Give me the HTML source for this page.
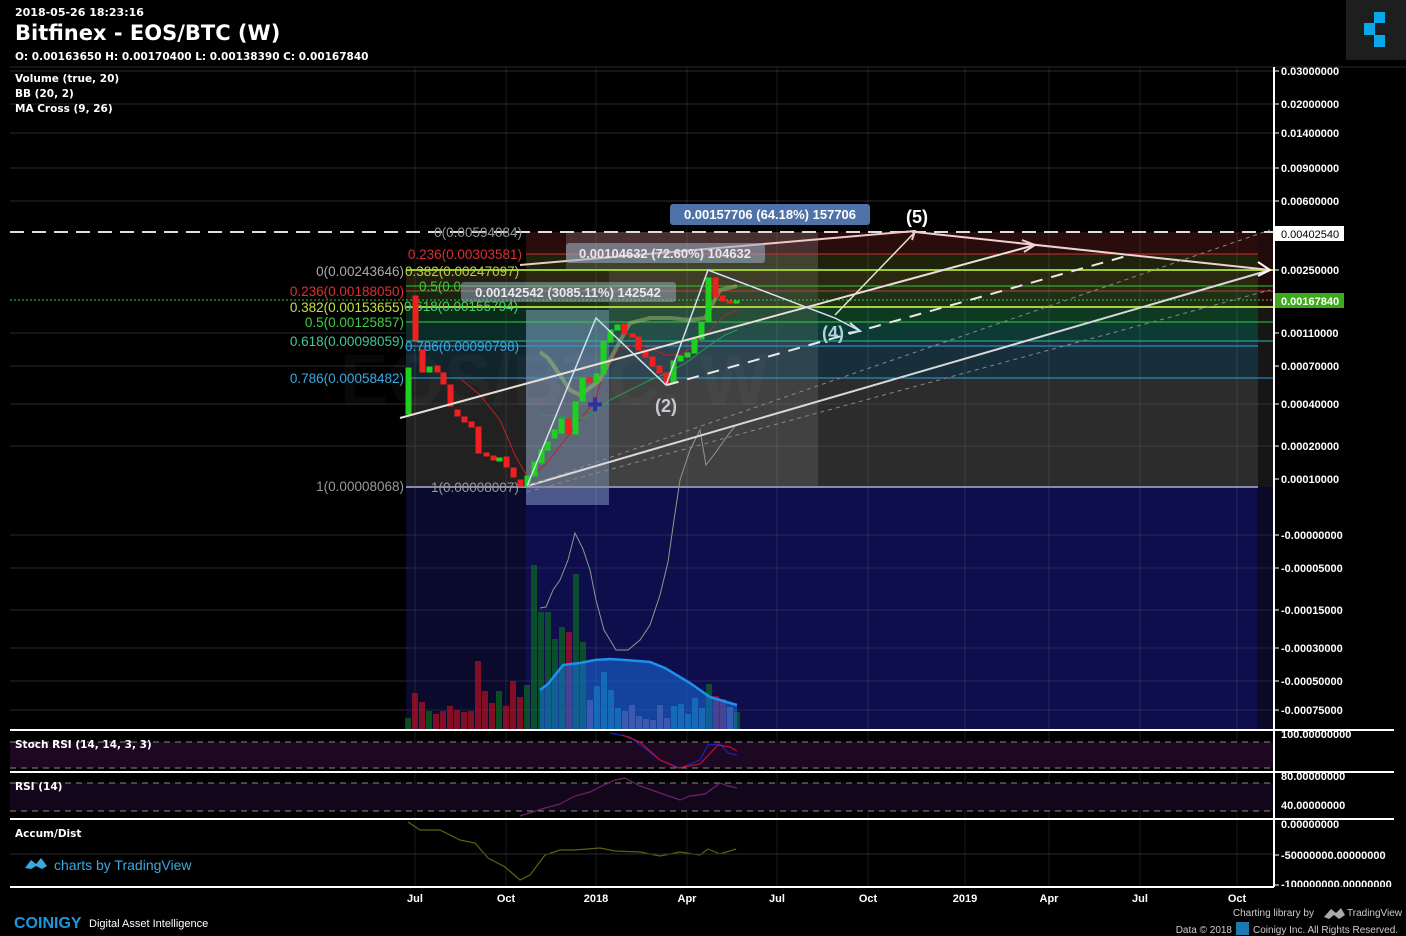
<!DOCTYPE html>
<html><head><meta charset="utf-8"><style>
html,body{margin:0;padding:0;background:#000;width:1406px;height:936px;overflow:hidden;font-family:"Liberation Sans",sans-serif}
svg{position:absolute;left:0;top:0}
</style></head><body>
<svg width="1406" height="936" viewBox="0 0 1406 936" font-family="Liberation Sans, sans-serif">
<rect width="1406" height="936" fill="#000"/>
<rect x="406" y="487" width="120" height="243" fill="#0a0a2c"/>
<rect x="526" y="487" width="731" height="243" fill="#0e0e4c"/>
<rect x="1257" y="487" width="16" height="243" fill="#0a0a26"/>
<rect x="526" y="232" width="732" height="22" fill="#2a0c0c"/>
<rect x="526" y="254" width="732" height="16" fill="#1e240c"/>
<rect x="406" y="270" width="852" height="17" fill="#2a2810"/>
<rect x="406" y="287" width="852" height="20" fill="#1e3016"/>
<rect x="406" y="307" width="852" height="15" fill="#0e3a22"/>
<rect x="406" y="322" width="852" height="19" fill="#0e3a34"/>
<rect x="406" y="341" width="852" height="37" fill="#172f3a"/>
<rect x="406" y="378" width="852" height="109" fill="#2c2c2c"/>
<rect x="1258" y="232" width="15" height="75" fill="#200a0a"/>
<rect x="1258" y="307" width="15" height="180" fill="#161616"/>
<rect x="406" y="270" width="120" height="217" fill="#000" opacity="0.25"/>
<rect x="526" y="310" width="83" height="195" fill="#9ab4dc" opacity="0.45"/>
<rect x="609" y="270" width="209" height="217" fill="#fff" opacity="0.1"/>
<rect x="566" y="232" width="252" height="38" fill="#fff" opacity="0.15"/>
<g stroke="#2a2a2a" stroke-width="1">
<line x1="10" y1="71" x2="1273" y2="71"/><line x1="10" y1="104" x2="1273" y2="104"/><line x1="10" y1="133" x2="1273" y2="133"/><line x1="10" y1="168" x2="1273" y2="168"/><line x1="10" y1="201" x2="1273" y2="201"/>
<line x1="10" y1="333" x2="406" y2="333"/><line x1="10" y1="366" x2="406" y2="366"/><line x1="10" y1="404" x2="406" y2="404"/><line x1="10" y1="446" x2="406" y2="446"/><line x1="10" y1="535" x2="406" y2="535"/><line x1="10" y1="568" x2="406" y2="568"/><line x1="10" y1="610" x2="406" y2="610"/><line x1="10" y1="648" x2="406" y2="648"/><line x1="10" y1="681" x2="406" y2="681"/><line x1="10" y1="710" x2="406" y2="710"/>
</g>
<g stroke="#ffffff" stroke-opacity="0.1">
<line x1="406" y1="404" x2="1273" y2="404"/><line x1="406" y1="446" x2="1273" y2="446"/><line x1="406" y1="535" x2="1273" y2="535"/><line x1="406" y1="568" x2="1273" y2="568"/><line x1="406" y1="610" x2="1273" y2="610"/><line x1="406" y1="648" x2="1273" y2="648"/><line x1="406" y1="681" x2="1273" y2="681"/><line x1="406" y1="710" x2="1273" y2="710"/>
<line x1="415" y1="67" x2="415" y2="886"/><line x1="506" y1="67" x2="506" y2="886"/><line x1="596" y1="67" x2="596" y2="886"/><line x1="687" y1="67" x2="687" y2="886"/><line x1="777" y1="67" x2="777" y2="886"/><line x1="868" y1="67" x2="868" y2="886"/><line x1="965" y1="67" x2="965" y2="886"/><line x1="1049" y1="67" x2="1049" y2="886"/><line x1="1140" y1="67" x2="1140" y2="886"/><line x1="1237" y1="67" x2="1237" y2="886"/>
</g>
<line x1="10" y1="67" x2="1406" y2="67" stroke="#2a2a2a"/>
<text x="340" y="405" font-size="72" font-weight="bold" fill="#fff" fill-opacity="0.03">EOS/BTC, W</text>
<g stroke-width="1">
<line x1="526" y1="254" x2="1258" y2="254" stroke="#d22c2c"/>
<line x1="406" y1="270" x2="1273" y2="270" stroke="#9ccc30" stroke-width="2"/>
<line x1="406" y1="286" x2="1273" y2="286" stroke="#36c83c"/>
<line x1="406" y1="291" x2="1273" y2="291" stroke="#c83c2c"/>
<line x1="10" y1="300" x2="1273" y2="300" stroke="#3cc83c" stroke-dasharray="2,2"/>
<line x1="406" y1="307" x2="1273" y2="307" stroke="#a8d040" stroke-width="2"/>
<line x1="406" y1="322" x2="1273" y2="322" stroke="#30d040"/>
<line x1="406" y1="341" x2="1273" y2="341" stroke="#30b8a0"/>
<line x1="406" y1="346" x2="1258" y2="346" stroke="#2ca0d8"/>
<line x1="406" y1="378" x2="1273" y2="378" stroke="#2ca0d8"/>
<line x1="406" y1="487" x2="1258" y2="487" stroke="#8a8aa8" stroke-width="2"/>
</g>
<line x1="10" y1="232" x2="1273" y2="232" stroke="#ddd" stroke-width="2" stroke-dasharray="14,8"/>
<g font-size="13.5" text-anchor="end">
<text x="522" y="237" fill="#999">0(0.00594084)</text>
<text x="522" y="259" fill="#d83030">0.236(0.00303581)</text>
<text x="404" y="276" fill="#aaa">0(0.00243646)</text>
<text x="404" y="296" fill="#e03030">0.236(0.00188050)</text>
<text x="404" y="312" fill="#c8e040">0.382(0.00153655)</text>
<text x="404" y="327" fill="#40d040">0.5(0.00125857)</text>
<text x="404" y="346" fill="#40c8a0">0.618(0.00098059)</text>
<text x="404" y="383" fill="#3aa8e0">0.786(0.00058482)</text>
<text x="404" y="491" fill="#999">1(0.00008068)</text>
</g>
<g font-size="13.5">
<text x="405" y="276" fill="#b8d040">0.382(0.00247097)</text>
<text x="419" y="291" fill="#40c840">0.5(0.0</text>
<text x="404" y="311" fill="#40d070">0.618(0.00155794)</text>
<text x="405" y="351" fill="#3aa8e0">0.786(0.00090798)</text>
<text x="431" y="492" fill="#999">1(0.00008007)</text>
</g>
<g stroke-width="1" fill-opacity="0.6">
<rect x="405" y="718" width="6" height="12" fill="#0a7a1a"/><rect x="412" y="693" width="6" height="37" fill="#d01020"/><rect x="419" y="702" width="6" height="28" fill="#d01020"/><rect x="426" y="711" width="6" height="19" fill="#0a7a1a"/><rect x="433" y="714" width="6" height="16" fill="#d01020"/><rect x="440" y="711" width="6" height="19" fill="#d01020"/><rect x="447" y="706" width="6" height="24" fill="#d01020"/><rect x="454" y="710" width="6" height="20" fill="#d01020"/><rect x="461" y="712" width="6" height="18" fill="#d01020"/><rect x="468" y="711" width="6" height="19" fill="#d01020"/><rect x="475" y="661" width="6" height="69" fill="#d01020"/><rect x="482" y="691" width="6" height="39" fill="#d01020"/><rect x="489" y="703" width="6" height="27" fill="#d01020"/><rect x="496" y="691" width="6" height="39" fill="#0a7a1a"/><rect x="503" y="706" width="6" height="24" fill="#d01020"/><rect x="510" y="681" width="6" height="49" fill="#d01020"/><rect x="517" y="697" width="6" height="33" fill="#d01020"/><rect x="524" y="685" width="6" height="45" fill="#0a7a1a"/><rect x="531" y="565" width="6" height="165" fill="#0a7a1a"/><rect x="538" y="612" width="6" height="118" fill="#0a7a1a"/><rect x="545" y="612" width="6" height="118" fill="#0a7a1a"/><rect x="552" y="639" width="6" height="91" fill="#0a7a1a"/><rect x="559" y="627" width="6" height="103" fill="#0a7a1a"/><rect x="566" y="632" width="6" height="98" fill="#d01020"/><rect x="573" y="574" width="6" height="156" fill="#0a7a1a"/><rect x="580" y="642" width="6" height="88" fill="#0a7a1a"/><rect x="587" y="700" width="6" height="30" fill="#a06090"/><rect x="594" y="686" width="6" height="44" fill="#10a0a0"/><rect x="601" y="672" width="6" height="58" fill="#10a0a0"/><rect x="608" y="690" width="6" height="40" fill="#10a0a0"/><rect x="615" y="708" width="6" height="22" fill="#10a0a0"/><rect x="622" y="711" width="6" height="19" fill="#a06090"/><rect x="629" y="705" width="6" height="25" fill="#a06090"/><rect x="636" y="716" width="6" height="14" fill="#a06090"/><rect x="643" y="719" width="6" height="11" fill="#a06090"/><rect x="650" y="720" width="6" height="10" fill="#a06090"/><rect x="657" y="705" width="6" height="25" fill="#a06090"/><rect x="664" y="718" width="6" height="12" fill="#a06090"/><rect x="671" y="706" width="6" height="24" fill="#10a0a0"/><rect x="678" y="704" width="6" height="26" fill="#10a0a0"/><rect x="685" y="714" width="6" height="16" fill="#10a0a0"/><rect x="692" y="698" width="6" height="32" fill="#10a0a0"/><rect x="699" y="708" width="6" height="22" fill="#10a0a0"/><rect x="706" y="684" width="6" height="46" fill="#0a7a1a"/><rect x="713" y="696" width="6" height="34" fill="#d01020"/><rect x="720" y="699" width="6" height="31" fill="#d01020"/><rect x="727" y="707" width="6" height="23" fill="#a06090"/><rect x="734" y="712" width="6" height="18" fill="#0a7a1a"/>
</g>
<path d="M540,690 L548,684 L563,665 L580,663 L595,660 L610,659 L625,660 L650,662 L665,668 L690,683 L710,697 L730,703 L737,705 L737,730 L540,730 Z" fill="#1a70e0" fill-opacity="0.55"/>
<path d="M540,690 L548,684 L563,665 L580,663 L595,660 L610,659 L625,660 L650,662 L665,668 L690,683 L710,697 L730,703 L737,705" fill="none" stroke="#1e90f0" stroke-width="2.5"/>
<path d="M540,608 L546,607 L553,590 L560,580 L568,560 L575,533 L583,549 L590,570 L596,600 L604,630 L616,650 L628,650 L640,640 L650,625 L660,595 L668,562 L674,520 L680,480 L690,450 L700,430 L706,465 L716,452 L728,435 L736,425" fill="none" stroke="#8a9a8a" stroke-width="1"/>
<path d="M462,380 L480,395 L500,420 L515,455 L528,478 L545,465 L565,440 L580,420 L595,400 L605,370 L618,350 L635,345 L650,348 L665,355 L680,355 L695,345 L710,330 L725,315 L737,310" fill="none" stroke="#c02020" stroke-width="1"/>
<path d="M540,415 L560,416 L575,420 L590,415 L610,400 L630,390 L650,380 L670,372 L690,360 L710,345 L725,335 L737,330" fill="none" stroke="#20a050" stroke-width="1"/>
<path d="M540,352 L548,358 L560,375 L570,390 L580,395 L600,380 L615,350 L630,323 L650,318 L670,318 L690,320 L705,318 L720,290 L737,286" fill="none" stroke="#a0c070" stroke-width="4" stroke-opacity="0.5"/>
<g stroke-width="1">
<g fill="#20d020" stroke="#20d020">
<rect x="406" y="368" width="5" height="46"/><rect x="427" y="367" width="5" height="5"/><rect x="497" y="458" width="5" height="3"/><rect x="525" y="476" width="5" height="10"/><rect x="532" y="462" width="5" height="14"/><rect x="539" y="450" width="5" height="13"/><rect x="545" y="442" width="5" height="8"/><rect x="552" y="430" width="5" height="8"/><rect x="559" y="419" width="5" height="14"/><rect x="573" y="402" width="5" height="32"/><rect x="580" y="378" width="5" height="23"/><rect x="594" y="374" width="5" height="8"/><rect x="601" y="342" width="5" height="32"/><rect x="608" y="330" width="5" height="12"/><rect x="615" y="325" width="5" height="5"/><rect x="671" y="361" width="5" height="22"/><rect x="678" y="356" width="5" height="5"/><rect x="685" y="353" width="5" height="4"/><rect x="692" y="339" width="5" height="14"/><rect x="699" y="323" width="5" height="16"/><rect x="706" y="278" width="5" height="44"/><rect x="734" y="301" width="5" height="2"/>
</g>
<g fill="#f02020" stroke="#f02020">
<rect x="413" y="296" width="5" height="44"/><rect x="420" y="350" width="5" height="22"/><rect x="435" y="366" width="5" height="6"/><rect x="441" y="373" width="5" height="11"/><rect x="448" y="385" width="5" height="21"/><rect x="455" y="410" width="5" height="6"/><rect x="462" y="417" width="5" height="5"/><rect x="469" y="422" width="5" height="5"/><rect x="476" y="427" width="5" height="26"/><rect x="484" y="453" width="5" height="3"/><rect x="491" y="456" width="5" height="4"/><rect x="504" y="457" width="5" height="10"/><rect x="511" y="468" width="5" height="9"/><rect x="518" y="480" width="5" height="6"/><rect x="566" y="419" width="5" height="15"/><rect x="587" y="378" width="5" height="4"/><rect x="622" y="324" width="5" height="10"/><rect x="630" y="334" width="5" height="3"/><rect x="636" y="337" width="5" height="13"/><rect x="643" y="350" width="5" height="7"/><rect x="650" y="357" width="5" height="9"/><rect x="657" y="366" width="5" height="7"/><rect x="664" y="373" width="5" height="10"/><rect x="713" y="278" width="5" height="19"/><rect x="720" y="296" width="5" height="5"/><rect x="727" y="301" width="5" height="2"/>
</g>
</g>
<text x="595" y="411" font-size="18" font-weight="bold" fill="#3030a0" text-anchor="middle">✚</text>
<g fill="none" stroke-width="2">
<path d="M527,486 L1270,270" stroke="#d8d8d8"/>
<path d="M400,418 L1035,245" stroke="#e8e0d8"/>
<path d="M520,265 L915,231" stroke="#f0c8c8"/>
<path d="M915,232 L1270,270" stroke="#f0d0d0"/>
<path d="M835,315 L915,232" stroke="#e0e8c0" stroke-width="1.5"/>
<path d="M527,486 L596,318 L666,385 L708,270 L835,318 L860,331" stroke="#d0e0f0" stroke-width="1.5"/>
<path d="M667,385 L1130,255" stroke="#e8e8e8" stroke-dasharray="12,9"/>
<path d="M527,486 L1270,230" stroke="#888" stroke-width="1" stroke-dasharray="4,4"/>
<path d="M527,492 L1270,290" stroke="#888" stroke-width="1" stroke-dasharray="4,4"/>
<path d="M1258,262 L1270,270 L1258,276" stroke="#fff"/>
<path d="M1022,240 L1035,245 L1024,252" stroke="#f0d0d0"/>
<path d="M905,232 L915,231 L912,240" stroke="#f0c8c8"/>
<path d="M850,323 L860,331 L848,333" stroke="#d0e0f0"/>
</g>
<rect x="670" y="204" width="200" height="21" rx="3" fill="#4f72a8"/>
<text x="770" y="219" font-size="13" font-weight="bold" fill="#fff" text-anchor="middle">0.00157706 (64.18%) 157706</text>
<rect x="566" y="243" width="199" height="20" rx="3" fill="#a0b0c8" fill-opacity="0.55"/>
<text x="665" y="258" font-size="13" font-weight="bold" fill="#e8e8f0" text-anchor="middle">0.00104632 (72.60%) 104632</text>
<rect x="461" y="282" width="215" height="20" rx="3" fill="#a0b0c8" fill-opacity="0.5"/>
<text x="568" y="297" font-size="13" font-weight="bold" fill="#e8e8f0" text-anchor="middle">0.00142542 (3085.11%) 142542</text>
<text x="917" y="223" font-size="18" font-weight="bold" fill="#fff" text-anchor="middle">(5)</text>
<text x="833" y="339" font-size="18" font-weight="bold" fill="#b0d0e0" text-anchor="middle">(4)</text>
<text x="666" y="412" font-size="18" font-weight="bold" fill="#c8c8d0" text-anchor="middle">(2)</text>
<rect x="10" y="742" width="1263" height="26" fill="#1c0820"/>
<rect x="10" y="783" width="1263" height="28" fill="#12061a"/>
<g stroke="#888" stroke-dasharray="6,5"><line x1="10" y1="742" x2="1273" y2="742"/><line x1="10" y1="768" x2="1273" y2="768"/><line x1="10" y1="783" x2="1273" y2="783"/><line x1="10" y1="811" x2="1273" y2="811"/></g>
<path d="M610,733 L630,737 L660,760 L680,768 L700,760 L708,745 L720,744 L728,753 L737,755" fill="none" stroke="#2020c0" stroke-width="1.2"/>
<path d="M622,735 L640,742 L660,760 L678,768 L700,764 L718,745 L730,747 L737,751" fill="none" stroke="#c01030" stroke-width="1.2"/>
<path d="M520,816 L545,808 L560,804 L575,796 L590,792 L602,786 L615,780 L625,778 L640,786 L660,793 L680,800 L690,796 L705,794 L720,783 L728,786 L737,788" fill="none" stroke="#702070" stroke-width="1.2"/>
<path d="M408,822 L420,830 L440,830 L460,840 L475,843 L488,858 L505,867 L520,880 L530,875 L545,855 L560,850 L575,850 L600,848 L615,851 L640,852 L660,856 L680,852 L700,855 L708,849 L720,854 L736,849" fill="none" stroke="#606010" stroke-width="1.2"/>
<g stroke="#fff" stroke-width="2"><line x1="10" y1="730" x2="1394" y2="730"/><line x1="10" y1="772" x2="1394" y2="772"/><line x1="10" y1="819" x2="1394" y2="819"/><line x1="10" y1="887" x2="1274" y2="887"/><line x1="1274" y1="67" x2="1274" y2="887"/></g>
<line x1="10" y1="854" x2="1273" y2="854" stroke="#2a2a2a"/>
<g stroke="#fff"><line x1="1274" y1="71" x2="1279" y2="71"/><line x1="1274" y1="104" x2="1279" y2="104"/><line x1="1274" y1="133" x2="1279" y2="133"/><line x1="1274" y1="168" x2="1279" y2="168"/><line x1="1274" y1="201" x2="1279" y2="201"/><line x1="1274" y1="270" x2="1279" y2="270"/><line x1="1274" y1="333" x2="1279" y2="333"/><line x1="1274" y1="366" x2="1279" y2="366"/><line x1="1274" y1="404" x2="1279" y2="404"/><line x1="1274" y1="446" x2="1279" y2="446"/><line x1="1274" y1="479" x2="1279" y2="479"/><line x1="1274" y1="535" x2="1279" y2="535"/><line x1="1274" y1="568" x2="1279" y2="568"/><line x1="1274" y1="610" x2="1279" y2="610"/><line x1="1274" y1="648" x2="1279" y2="648"/><line x1="1274" y1="681" x2="1279" y2="681"/><line x1="1274" y1="710" x2="1279" y2="710"/><line x1="1274" y1="855" x2="1279" y2="855"/><line x1="1274" y1="885" x2="1279" y2="885"/></g>
<g font-size="11" fill="#fff" font-weight="bold">
<text x="1281" y="75">0.03000000</text><text x="1281" y="108">0.02000000</text><text x="1281" y="137">0.01400000</text><text x="1281" y="172">0.00900000</text><text x="1281" y="205">0.00600000</text><text x="1281" y="274">0.00250000</text><text x="1281" y="337">0.00110000</text><text x="1281" y="370">0.00070000</text><text x="1281" y="408">0.00040000</text><text x="1281" y="450">0.00020000</text><text x="1281" y="483">0.00010000</text><text x="1281" y="539">-0.00000000</text><text x="1281" y="572">-0.00005000</text><text x="1281" y="614">-0.00015000</text><text x="1281" y="652">-0.00030000</text><text x="1281" y="685">-0.00050000</text><text x="1281" y="714">-0.00075000</text><text x="1281" y="738">100.00000000</text><text x="1281" y="780">80.00000000</text><text x="1281" y="809">40.00000000</text><text x="1281" y="828">0.00000000</text><text x="1281" y="859">-50000000.00000000</text><text x="1281" y="888">-100000000.00000000</text>
</g>
<rect x="1275" y="226" width="69" height="15" fill="#fff"/><text x="1281" y="238" font-size="11" fill="#000">0.00402540</text>
<rect x="1275" y="293" width="69" height="15" fill="#3caa1a"/><text x="1281" y="305" font-size="11" font-weight="bold" fill="#fff">0.00167840</text>
<rect x="1274" y="887" width="132" height="10" fill="#000"/>
<g font-size="11" font-weight="bold" fill="#fff" text-anchor="middle">
<text x="415" y="902">Jul</text><text x="506" y="902">Oct</text><text x="596" y="902">2018</text><text x="687" y="902">Apr</text><text x="777" y="902">Jul</text><text x="868" y="902">Oct</text><text x="965" y="902">2019</text><text x="1049" y="902">Apr</text><text x="1140" y="902">Jul</text><text x="1237" y="902">Oct</text>
</g>
<g font-family="DejaVu Sans, sans-serif" font-weight="bold" fill="#fff">
<text x="15" y="16" font-size="11">2018-05-26 18:23:16</text>
<text x="15" y="40" font-size="21">Bitfinex - EOS/BTC (W)</text>
<text x="15" y="60" font-size="10.5">O: 0.00163650 H: 0.00170400 L: 0.00138390 C: 0.00167840</text>
<g font-size="10.5"><text x="15" y="82">Volume (true, 20)</text><text x="15" y="97">BB (20, 2)</text><text x="15" y="112">MA Cross (9, 26)</text>
<text x="15" y="748">Stoch RSI (14, 14, 3, 3)</text><text x="15" y="790">RSI (14)</text><text x="15" y="837">Accum/Dist</text></g>
</g>
<path d="M25,868 L31,860 L36,864 L41,858 L47,866 L42,869 L36,866 L31,869 Z" fill="#3aa8dc"/>
<text x="54" y="870" font-size="14" fill="#3aa8dc">charts by TradingView</text>
<rect x="1346" y="0" width="60" height="60" fill="#1e1e1e"/>
<rect x="1374" y="12" width="11" height="11" fill="#0aa8e8"/><rect x="1364" y="23" width="11" height="12" fill="#0aa8e8"/><rect x="1374" y="35" width="11" height="12" fill="#0aa8e8"/>
<text x="14" y="928" font-size="16" font-weight="bold" fill="#1a98dc">COINIGY</text>
<text x="89" y="927" font-size="11" fill="#fff">Digital Asset Intelligence</text>
<text x="1314" y="916" font-size="10" fill="#ccc" text-anchor="end">Charting library by</text>
<path d="M1324,917 L1331,909 L1336,913 L1341,908 L1345,915 L1339,919 L1334,915 L1329,919 Z" fill="#aaa"/>
<text x="1347" y="916" font-size="10" fill="#ccc">TradingView</text>
<text x="1232" y="933" font-size="10" fill="#ccc" text-anchor="end">Data © 2018</text>
<rect x="1236" y="922" width="13" height="13" fill="#1a7ab0"/>
<text x="1253" y="933" font-size="10" fill="#ccc">Coinigy Inc. All Rights Reserved.</text>
</svg>
</body></html>
